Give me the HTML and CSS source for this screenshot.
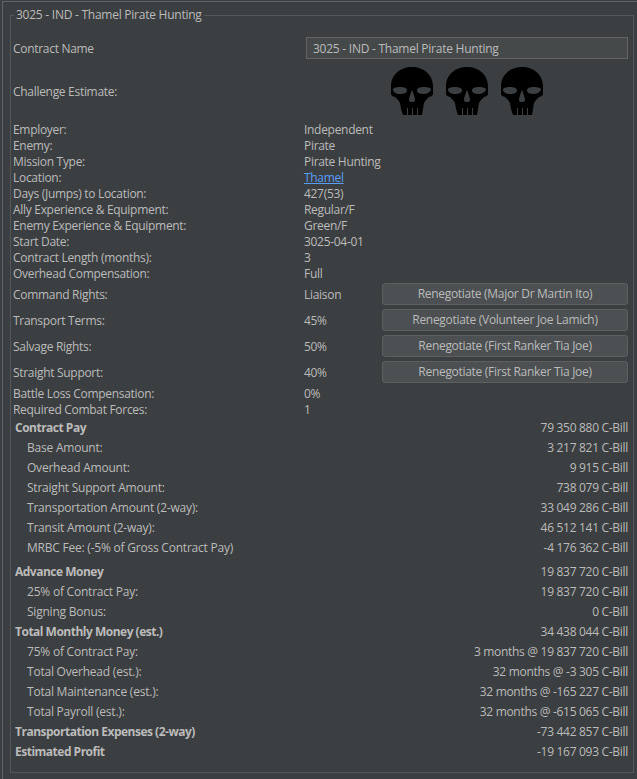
FILE: index.html
```html
<!DOCTYPE html>
<html lang="en">
<head>
<meta charset="utf-8">
<title>Contract</title>
<link rel="stylesheet" href="styles.css">
</head>
<body>
<svg class="defs" width="0" height="0" aria-hidden="true">
  <symbol id="skull" viewBox="0 0 42 48">
    <path fill-rule="evenodd" d="M21 0C33 0 42 8 42 19V27L41 29L38 30L35 33L33 36L32 42L31 48H12L10 42L9 36L7 33L4 30L1 29L0 27V19C0 8 9 0 21 0Z"/>
    <path fill="#3c3f41" d="M2 22.5C2 21 5 20 9 20S16 21 16 23.5S13 27 9 27S2 25 2 22.5ZM26 23.5C26 21 29 20 33 20S40 21 40 22.5S37 27 33 27S26 26 26 23.5ZM21 23C22 25 24 31 24 33C24 35 22 35 21 35S18 35 18 33C18 31 20 25 21 23ZM16 41H17V48H16ZM21 41H22V48H21ZM26 41H27V48H26Z"/>
  </symbol>
</svg>
<div class="panel">
  <fieldset class="group">
    <legend class="legend">3025 - IND - Thamel Pirate Hunting</legend>
    <div class="row row-name">
      <span class="label">Contract Name</span>
      <input class="field" type="text" value="3025 - IND - Thamel Pirate Hunting">
    </div>
    <div class="row row-challenge">
      <span class="label">Challenge Estimate:</span>
      <div class="skulls">
        <svg class="skull"><use href="#skull"/></svg>
        <svg class="skull"><use href="#skull"/></svg>
        <svg class="skull"><use href="#skull"/></svg>
      </div>
    </div>
    <div class="row"><span class="label">Employer:</span><span>Independent</span></div>
    <div class="row"><span class="label">Enemy:</span><span>Pirate</span></div>
    <div class="row"><span class="label">Mission Type:</span><span>Pirate Hunting</span></div>
    <div class="row"><span class="label">Location:</span><a class="link" href="#">Thamel</a></div>
    <div class="row"><span class="label">Days (Jumps) to Location:</span><span>427(53)</span></div>
    <div class="row"><span class="label">Ally Experience &amp; Equipment:</span><span>Regular/F</span></div>
    <div class="row"><span class="label">Enemy Experience &amp; Equipment:</span><span>Green/F</span></div>
    <div class="row"><span class="label">Start Date:</span><span>3025-04-01</span></div>
    <div class="row"><span class="label">Contract Length (months):</span><span>3</span></div>
    <div class="row"><span class="label">Overhead Compensation:</span><span>Full</span></div>
    <div class="terms">
      <div class="row row-term"><span class="label">Command Rights:</span><span class="term-value">Liaison</span><button class="btn" type="button">Renegotiate (Major Dr Martin Ito)</button></div>
      <div class="row row-term"><span class="label">Transport Terms:</span><span class="term-value">45%</span><button class="btn" type="button">Renegotiate (Volunteer Joe Lamich)</button></div>
      <div class="row row-term"><span class="label">Salvage Rights:</span><span class="term-value">50%</span><button class="btn" type="button">Renegotiate (First Ranker Tia Joe)</button></div>
      <div class="row row-term"><span class="label">Straight Support:</span><span class="term-value">40%</span><button class="btn" type="button">Renegotiate (First Ranker Tia Joe)</button></div>
    </div>
    <div class="row"><span class="label">Battle Loss Compensation:</span><span>0%</span></div>
    <div class="row"><span class="label">Required Combat Forces:</span><span>1</span></div>
    <div class="pay">
      <div class="pay-row head"><span>Contract Pay</span><span class="amount">79 350 880 C-Bill</span></div>
      <div class="pay-row sub"><span>Base Amount:</span><span class="amount">3 217 821 C-Bill</span></div>
      <div class="pay-row sub"><span>Overhead Amount:</span><span class="amount">9 915 C-Bill</span></div>
      <div class="pay-row sub"><span>Straight Support Amount:</span><span class="amount">738 079 C-Bill</span></div>
      <div class="pay-row sub"><span>Transportation Amount (2-way):</span><span class="amount">33 049 286 C-Bill</span></div>
      <div class="pay-row sub"><span>Transit Amount (2-way):</span><span class="amount">46 512 141 C-Bill</span></div>
      <div class="pay-row sub"><span>MRBC Fee: (-5% of Gross Contract Pay)</span><span class="amount">-4 176 362 C-Bill</span></div>
      <div class="pay-row head advance"><span>Advance Money</span><span class="amount">19 837 720 C-Bill</span></div>
      <div class="pay-row sub"><span>25% of Contract Pay:</span><span class="amount">19 837 720 C-Bill</span></div>
      <div class="pay-row sub"><span>Signing Bonus:</span><span class="amount">0 C-Bill</span></div>
      <div class="pay-row head"><span>Total Monthly Money (est.)</span><span class="amount">34 438 044 C-Bill</span></div>
      <div class="pay-row sub"><span>75% of Contract Pay:</span><span class="amount">3 months @ 19 837 720 C-Bill</span></div>
      <div class="pay-row sub"><span>Total Overhead (est.):</span><span class="amount">32 months @ -3 305 C-Bill</span></div>
      <div class="pay-row sub"><span>Total Maintenance (est.):</span><span class="amount">32 months @ -165 227 C-Bill</span></div>
      <div class="pay-row sub"><span>Total Payroll (est.):</span><span class="amount">32 months @ -615 065 C-Bill</span></div>
      <div class="pay-row head"><span>Transportation Expenses (2-way)</span><span class="amount">-73 442 857 C-Bill</span></div>
      <div class="pay-row head"><span>Estimated Profit</span><span class="amount">-19 167 093 C-Bill</span></div>
    </div>
  </fieldset>
</div>
</body>
</html>
```

FILE: styles.css
```css
html, body {
  margin: 0;
  height: 779px;
  overflow: hidden;
  background: #3c3f41;
}
body {
  color: #bbbbbb;
  font: 12px/16px "Open Sans", "Noto Sans", sans-serif;
  letter-spacing: -0.3px;
}
.defs { position: absolute; }
.panel {
  margin: 1px 0 0 2px;
  height: 778px;
  box-sizing: border-box;
  border-top: 1px solid #616365;
  border-left: 1px solid #616365;
  padding: 5px 0 0 7px;
}
.group {
  box-sizing: border-box;
  width: 624px;
  height: 766px;
  margin: 0;
  border: 1px solid #555759;
  padding: 14px 5px 0 2px;
  min-width: 0;
}
.legend {
  margin-left: 1px;
  padding: 0 2px;
  line-height: 16px;
  letter-spacing: -0.25px;
}
.row {
  display: flex;
  align-items: center;
  height: 16px;
}
.label { width: 291px; flex: none; }
.row-name { height: 22px; margin-bottom: 8px; }
.row-name .label,
.row-challenge .label,
.row-term .label,
.term-value { padding-top: 2px; }
.row-challenge { height: 48px; margin-bottom: 7px; }
.field {
  box-sizing: border-box;
  width: 322px;
  height: 22px;
  margin: 0 0 0 2px;
  border: 1px solid #646464;
  padding: 0 6px;
  background: #45494a;
  color: #bbbbbb;
  font: inherit;
  letter-spacing: -0.25px;
}
.skulls {
  display: flex;
  gap: 13px;
  margin-left: 87px;
}
.skull { width: 42px; height: 48px; display: block; fill: #000; }
.link { color: #589df6; }
.terms {
  display: flex;
  flex-direction: column;
  gap: 4px;
  margin: 1px 0 3px;
}
.row-term { height: 22px; }
.term-value { width: 78px; flex: none; }
.btn {
  box-sizing: border-box;
  width: 246px;
  height: 22px;
  padding: 0;
  border: 1px solid #5e6060;
  border-radius: 3px;
  background: #4c5052;
  color: #bbbbbb;
  font: inherit;
  letter-spacing: inherit;
}
.pay { margin: 0 0 0 2px; }
.pay-row {
  display: flex;
  justify-content: space-between;
  align-items: center;
  height: 20px;
}
.head > span:first-child { font-weight: 700; letter-spacing: -0.5px; }
.sub > span:first-child { padding-left: 12px; letter-spacing: -0.22px; }
.advance { margin-top: 4px; }
```
